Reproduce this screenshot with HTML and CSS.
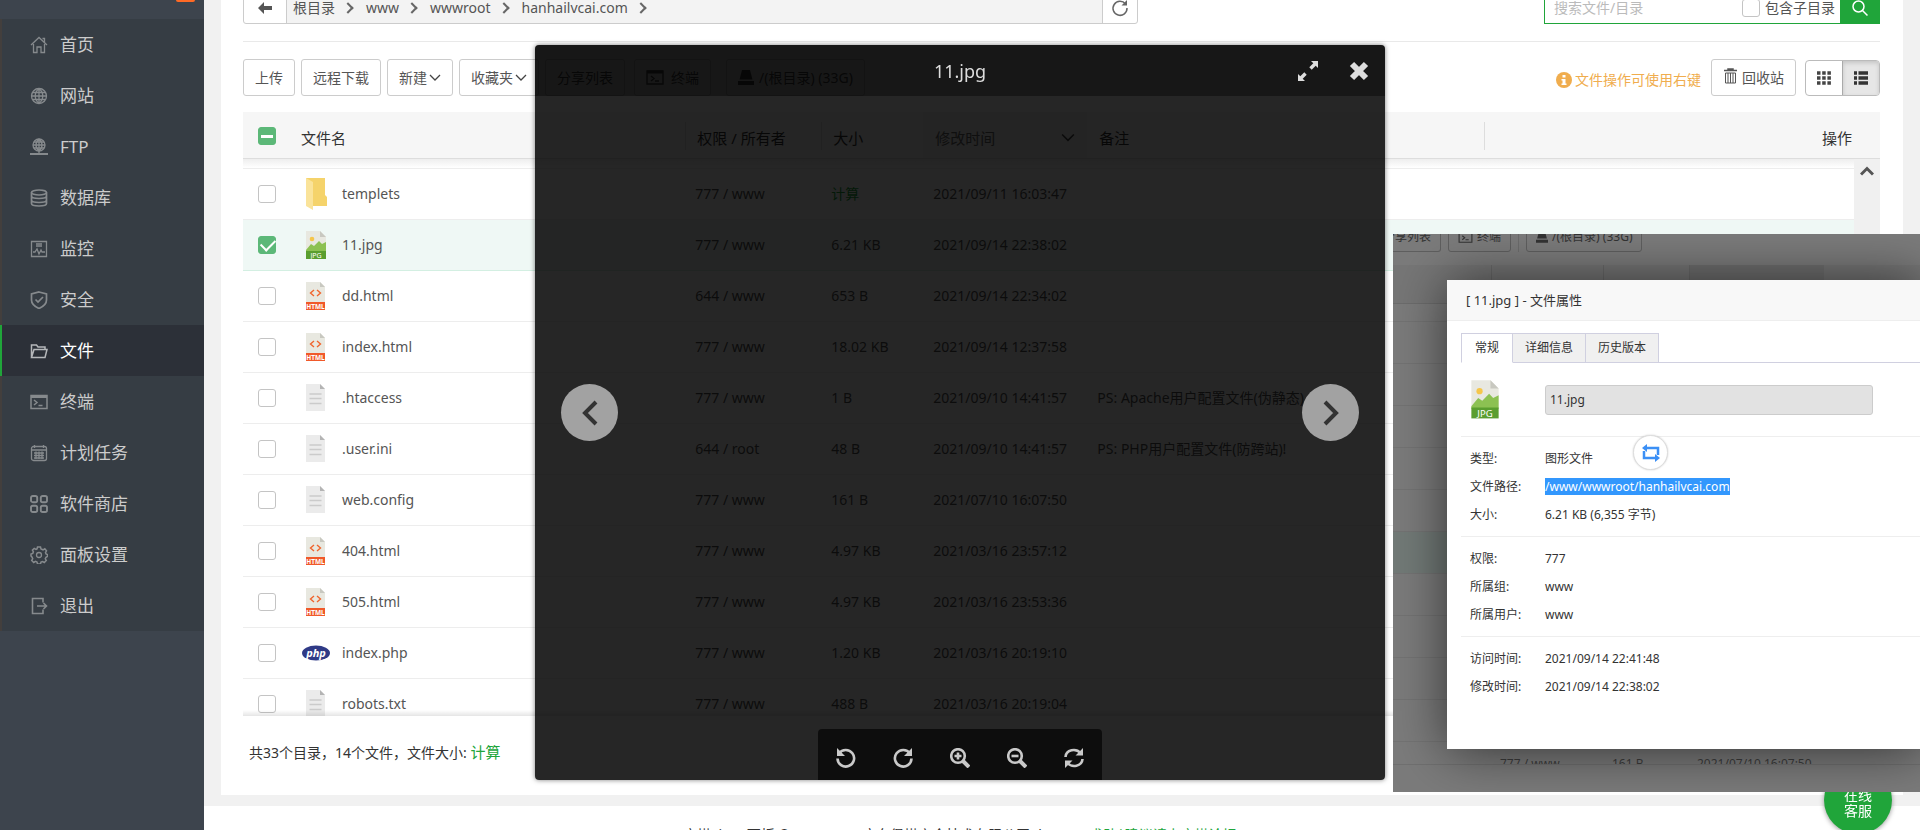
FILE: index.html
```
<!DOCTYPE html>
<html lang="zh-CN">
<head>
    <meta charset="UTF-8">
    <meta name="viewport" content="width=device-width, initial-scale=1.0">
    <title>文件</title>
    <link rel="stylesheet" href="styles.css">
</head>
<body>

<!-- icons used more than once -->
<svg class="sprite" aria-hidden="true">
    <symbol id="i-jpg" viewBox="0 0 22 29">
        <path fill="#e8e8e0" d="M1 0h14l6 6v14H1z"/>
        <path fill="#c8c8c0" d="M15 0l6 6h-6z"/>
        <circle cx="7" cy="8" r="2.3" fill="#f5c64b"/>
        <path fill="#8cc152" d="M1 19l5-6 3 2 5-5 3 3 4-2v10H1z"/>
        <path fill="#5a9e2f" d="M1 20h20v8H1z"/>
        <text x="11" y="27" fill="#fff" font-size="7" text-anchor="middle">JPG</text>
    </symbol>
    <symbol id="i-html" viewBox="0 0 22 29">
        <path fill="#e8e8e0" d="M1 0h14l5 5v15H1z"/>
        <path fill="#c8c8c0" d="M15 0l5 5h-5z"/>
        <path fill="none" stroke="#f0642d" stroke-width="1.4" d="M9 8l-3.500 3L9 14M12 8l3.500 3L12 14"/>
        <path fill="#f0592a" d="M1 20h19v8H1z"/>
        <text x="10.500" y="26.500" fill="#fff" font-size="6.500" font-weight="bold" text-anchor="middle">HTML</text>
    </symbol>
    <symbol id="i-txt" viewBox="0 0 22 29">
        <path fill="#ebebeb" d="M1 0h14l5 5v22H1z"/>
        <path fill="#b4b4b4" d="M15 0l5 5h-5z"/>
        <path stroke="#cbcbcb" stroke-width="1.300" d="M4.500 10h12M4.500 14.500h12M4.500 19.500h12"/>
    </symbol>
    <symbol id="i-down" viewBox="0 0 12 8">
        <path fill="none" stroke="currentColor" stroke-width="1.300" d="M1 1l5 5 5-5"/>
    </symbol>
    <symbol id="i-term" viewBox="0 0 18 15">
        <path fill="none" stroke="currentColor" stroke-width="1.400" d="M1 1h16v13H1zM5 6l3 2.500L5 11M9 11h4"/>
        <path stroke="currentColor" stroke-width="3" d="M1 2h16"/>
    </symbol>
    <symbol id="i-disk" viewBox="0 0 16 15">
        <path fill="currentColor" d="M4 0h8l2.500 9.500h-13zM0 11h16v4H0z"/>
    </symbol>
</svg>

<aside class="sidebar">
    <span class="msg-badge"></span>
    <nav class="menu">
        <a href="#"><svg viewBox="0 0 18 18"><path d="M1 9l8-7.500L17 9M12.500 2.500h2v4M3.500 8v8.500h3.500V11h4v5.500h3.500V8"/></svg>首页</a>
        <a href="#"><svg viewBox="0 0 18 18"><circle cx="9" cy="9" r="7.500"/><path d="M1.500 9h15M9 1.500v15M2.500 5.500h13M2.500 12.500h13M9 1.500c-5 4-5 11 0 15M9 1.500c5 4 5 11 0 15"/></svg>网站</a>
        <a href="#"><svg viewBox="0 0 18 18"><circle cx="9" cy="7" r="6"/><path d="M3 7h12M9 1v15M4 4h10M4 10h10M9 1c-4 3-4 9 0 12M9 1c4 3 4 9 0 12"/><path stroke-width="2" d="M0 16h18M7 16h4"/></svg>FTP</a>
        <a href="#"><svg viewBox="0 0 18 18"><g stroke-width="1.700"><ellipse cx="9" cy="3.500" rx="7.500" ry="2.500"/><path d="M1.500 3.500v11c0 3.300 15 3.300 15 0v-11M1.500 7c0 3.300 15 3.300 15 0M1.500 11c0 3.300 15 3.300 15 0"/></g></svg>数据库</a>
        <a href="#"><svg viewBox="0 0 18 18"><path d="M1.500 1.500h15v15h-15zM6 4h6M6 6h6M3 12h2l2-3 2 5 2-4 1 2h3"/></svg>监控</a>
        <a href="#"><svg viewBox="0 0 18 18"><path stroke-width="1.700" d="M9 1l7.500 2v6c0 4-3 6.500-7.500 8.500C4.500 15.500 1.500 13 1.500 9V3zM5.500 8.500L8 11l5-5"/></svg>安全</a>
        <a href="#" class="on"><svg viewBox="0 0 18 18"><path stroke-width="1.500" d="M1.500 15.500V3h5l1.500 2h7v2M1.500 15.500L4 7.500h13l-2 8z"/></svg>文件</a>
        <a href="#"><svg viewBox="0 0 18 18"><path stroke-width="1.500" d="M1 2.500h16v13H1zM4 7l3 2.500L4 12M8.500 12.500h4"/><path stroke-width="3" d="M1 3.500h16"/></svg>终端</a>
        <a href="#"><svg viewBox="0 0 18 18"><rect x="1.500" y="2.500" width="15" height="14" rx="2"/><path d="M1.500 6h15M4.500 1v3M13.500 1v3M4 9h10M4 11.500h10M4 14h10M6 7.500V15M9 7.500V15M12 7.500V15"/></svg>计划任务</a>
        <a href="#"><svg viewBox="0 0 18 18"><g stroke-width="1.900"><rect x="1" y="1" width="6.200" height="6.200" rx="1.800"/><rect x="10.800" y="1" width="6.200" height="6.200" rx="1.800"/><rect x="1" y="10.800" width="6.200" height="6.200" rx="1.800"/><rect x="10.800" y="10.800" width="6.200" height="6.200" rx="1.800"/></g></svg>软件商店</a>
        <a href="#"><svg viewBox="0 0 18 18"><circle cx="9" cy="9" r="2.500"/><path stroke-width="1.500" d="M7.500 1h3l.5 2 2 .8 1.800-1 1.700 2-1 1.800.5 1.400 1.500.5v2l-1.500.8-.7 1.500 1 1.700-2 2-1.700-1-1.600.6-.5 1.900h-3l-.5-1.900-1.500-.7-1.800 1.100-2-2 1-1.700-.6-1.600L1 10V8l1.800-.6.6-1.500-1-1.700 1.800-1.800L6 3.500l1-.5z"/></svg>面板设置</a>
        <a href="#"><svg viewBox="0 0 18 18"><path stroke-width="1.600" d="M13 5.500V1.500H2.500v15H13v-4M7 9h9.500M13.500 6l3 3-3 3"/></svg>退出</a>
    </nav>
</aside>

<main class="main">
    <section class="card">
        <div class="path-row">
            <div class="path">
                <button class="path-btn back" aria-label="返回"><svg width="14" height="12" viewBox="0 0 14 12"><path fill="#555" d="M0 6l6-6v4h8v4H6v4z"/></svg></button>
                <div class="crumbs">
                    <a href="#">根目录</a><a href="#">www</a><a href="#">wwwroot</a><a href="#">hanhailvcai.com</a>
                </div>
                <button class="path-btn" aria-label="刷新"><svg width="18" height="18" viewBox="0 0 18 18"><path fill="none" stroke="#666" stroke-width="1.500" d="M14.500 5A7 7 0 1 0 16 9"/><path fill="#666" d="M16 1v5.500h-5.500z"/></svg></button>
            </div>
            <div class="search">
                <input type="text" placeholder="搜索文件/目录" aria-label="搜索文件/目录">
                <input type="checkbox" class="ck" id="sub"><label for="sub">包含子目录</label>
                <button aria-label="搜索"><svg width="18" height="18" viewBox="0 0 18 18"><g fill="none" stroke="#fff" stroke-width="1.500"><circle cx="7.500" cy="7.500" r="5.500"/><path d="M11.500 11.500l5 5"/></g></svg></button>
            </div>
        </div>

        <div class="tools">
            <button class="btn">上传</button>
            <button class="btn">远程下载</button>
            <button class="btn">新建<svg class="down"><use href="#i-down"/></svg></button>
            <button class="btn">收藏夹<svg class="down"><use href="#i-down"/></svg></button>
            <button class="btn">分享列表</button>
            <button class="btn term"><svg width="18" height="15"><use href="#i-term"/></svg>终端</button>
            <button class="btn disk"><svg width="16" height="15"><use href="#i-disk"/></svg>/(根目录) (33G)</button>
            <span class="tip"><svg width="16" height="16" viewBox="0 0 16 16"><circle cx="8" cy="8" r="8" fill="#f0ad4e"/><path fill="#fff" d="M6.500 3h3v2.500h-3zM5.500 7h4v4.500h1V13h-5v-1.500h1v-3h-1z"/></svg>文件操作可使用右键</span>
            <button class="btn bin"><svg width="13" height="16" viewBox="0 0 13 16"><g fill="none" stroke="#555"><path stroke-width="1.500" d="M0 2.500h13M4 2.500V1h5v1.500"/><path d="M1.500 5h10v10h-10zM4 5v10M6.500 5v10M9 5v10"/></g></svg>回收站</button>
            <div class="views">
                <button aria-label="图标"><svg width="14" height="14" viewBox="0 0 14 14"><path stroke="#444" stroke-width="3.500" stroke-dasharray="3.500 1.700" d="M0 2h14M0 7h14M0 12h14"/></svg></button>
                <button class="on" aria-label="列表"><svg width="14" height="14" viewBox="0 0 14 14"><path stroke="#333" stroke-width="3.500" stroke-dasharray="3 1.500 10" d="M0 2h14M0 7h14M0 12h14"/></svg></button>
            </div>
        </div>

        <div class="list">
            <table>
                <colgroup>
                    <col class="c-ck"><col><col class="c-perm"><col class="c-size"><col class="c-time"><col><col>
                </colgroup>
                <thead>
                    <tr>
                        <th><input type="checkbox" class="ck half" aria-label="全选"></th>
                        <th>文件名</th>
                        <th class="sep">权限 / 所有者</th>
                        <th class="sep">大小</th>
                        <th class="sort"><span>修改时间<svg class="down"><use href="#i-down"/></svg></span></th>
                        <th>备注</th>
                        <th class="sep op">操作</th>
                    </tr>
                </thead>
                <tbody id="files">
                    <tr class="cut"><td colspan="7"></td></tr>
                </tbody>
            </table>
            <div class="scroll"><svg width="14" height="10" viewBox="0 0 14 10"><path fill="none" stroke="#555" stroke-width="3" d="M1 8.500l6-6 6 6"/></svg></div>
        </div>

        <div class="total">共33个目录，14个文件，文件大小: <a href="#">计算</a></div>
    </section>
    <footer class="copy">宝塔Linux面板 ©2014-2021 广东堡塔安全技术有限公司 (bt.cn)<a href="#">求助|建议请上宝塔论坛</a></footer>
</main>

<button class="service">在线<br>客服</button>

<!-- image preview -->
<div class="preview">
    <div class="preview-head">
        <span class="preview-title">11.jpg</span>
        <button aria-label="全屏"><svg width="22" height="22" viewBox="0 0 22 22"><path fill="#ddd" d="M14 1h7v7l-2.300-2.300-4 4-2.400-2.400 4-4zM8 21H1v-7l2.300 2.300 4-4 2.400 2.400-4 4z"/></svg></button>
        <button aria-label="关闭"><svg width="20" height="20" viewBox="0 0 20 20"><path stroke="#ddd" stroke-width="6" d="M3 3l14 14M17 3L3 17"/></svg></button>
    </div>
    <div class="preview-body">
        <button class="arrow" aria-label="上一张"><svg width="18" height="28" viewBox="0 0 18 28"><path fill="none" stroke="#333" stroke-width="4" d="M15 3L4 14l11 11"/></svg></button>
        <button class="arrow" aria-label="下一张"><svg width="18" height="28" viewBox="0 0 18 28"><path fill="none" stroke="#333" stroke-width="4" d="M3 3l11 11L3 25"/></svg></button>
    </div>
    <div class="preview-tools">
        <button aria-label="左旋"><svg viewBox="0 0 20 20"><path d="M3 5.500A8.300 8.300 0 1 1 1.500 10.500"/><path class="fill" d="M1 0v8h8z"/></svg></button>
        <button aria-label="右旋"><svg viewBox="0 0 20 20"><path d="M17 5.500A8.300 8.300 0 1 0 18.500 10.500"/><path class="fill" d="M19 0v8h-8z"/></svg></button>
        <button aria-label="放大"><svg viewBox="0 0 20 20"><circle cx="8" cy="8" r="6.800"/><path d="M8 4.500v7M4.500 8h7"/><path stroke-width="4" d="M13 13l6 6"/></svg></button>
        <button aria-label="缩小"><svg viewBox="0 0 20 20"><circle cx="8" cy="8" r="6.800"/><path d="M4.500 8h7"/><path stroke-width="4" d="M13 13l6 6"/></svg></button>
        <button aria-label="重置"><svg viewBox="0 0 20 20"><path d="M1.500 9C2 1.500 12 0 16.500 5M18.500 11C18 18.500 8 20 3.500 15"/><path class="fill" d="M19 0v7.500h-7.500zM1 20v-7.500h7.500z"/></svg></button>
    </div>
</div>

<!-- file properties -->
<div class="shot">
    <div class="shot-tools">
        <span class="first">分享列表</span>
        <span><svg width="15" height="12"><use href="#i-term"/></svg>终端</span>
        <i></i>
        <span><svg width="12" height="12"><use href="#i-disk"/></svg>/(根目录) (33G)</span>
    </div>
    <div class="shot-head"><i></i><i></i><i class="dark"></i></div>
    <div class="shot-rows">
        <p></p><p></p><p></p><p></p><p></p><p></p><p class="on"></p><p></p><p></p><p></p><p></p>
        <div class="shot-last"><span>777 / www</span><span>161 B</span><span>2021/07/10 16:07:50</span></div>
    </div>
    <div class="shot-foot"></div>

    <div class="prop">
        <h2>[ 11.jpg ] - 文件属性</h2>
        <div class="tabs">
            <button class="on">常规</button><button>详细信息</button><button>历史版本</button>
        </div>
        <div class="prop-name">
            <svg width="30" height="40"><use href="#i-jpg"/></svg>
            <input type="text" value="11.jpg" aria-label="文件名" disabled>
        </div>
        <dl>
            <dt>类型:</dt><dd>图形文件</dd>
            <dt>文件路径:</dt><dd><mark>/www/wwwroot/hanhailvcai.com</mark></dd>
            <dt>大小:</dt><dd>6.21 KB (6,355 字节)</dd>
        </dl>
        <dl>
            <dt>权限:</dt><dd>777</dd>
            <dt>所属组:</dt><dd>www</dd>
            <dt>所属用户:</dt><dd>www</dd>
        </dl>
        <dl>
            <dt>访问时间:</dt><dd>2021/09/14 22:41:48</dd>
            <dt>修改时间:</dt><dd>2021/09/14 22:38:02</dd>
        </dl>
        <button class="trans" aria-label="翻译"><svg width="18" height="18" viewBox="0 0 18 18"><path fill="none" stroke="#3b8ff5" stroke-width="2.500" d="M4 4h12v7M14 14H2V7"/><path fill="#3b8ff5" d="M5 0v8L0 4zM13 10v8l5-4z"/></svg></button>
    </div>
</div>

<script>
    const files = [
        ["dir", "templets", "777 / www", "计算", "2021/09/11 16:03:47", ""],
        ["jpg", "11.jpg", "777 / www", "6.21 KB", "2021/09/14 22:38:02", ""],
        ["html", "dd.html", "644 / www", "653 B", "2021/09/14 22:34:02", ""],
        ["html", "index.html", "777 / www", "18.02 KB", "2021/09/14 12:37:58", ""],
        ["txt", ".htaccess", "777 / www", "1 B", "2021/09/10 14:41:57", "PS: Apache用户配置文件(伪静态)"],
        ["txt", ".user.ini", "644 / root", "48 B", "2021/09/10 14:41:57", "PS: PHP用户配置文件(防跨站)!"],
        ["txt", "web.config", "777 / www", "161 B", "2021/07/10 16:07:50", ""],
        ["html", "404.html", "777 / www", "4.97 KB", "2021/03/16 23:57:12", ""],
        ["html", "505.html", "777 / www", "4.97 KB", "2021/03/16 23:53:36", ""],
        ["php", "index.php", "777 / www", "1.20 KB", "2021/03/16 20:19:10", ""],
        ["txt", "robots.txt", "777 / www", "488 B", "2021/03/16 20:19:04", ""]
    ];

    function icon(type) {
        if (type === "dir") {
            return '<svg width="28" height="34" viewBox="0 0 28 34"><path fill="#f5d36b" d="M4 1h19v17l2 2v9H10z"/><path fill="#fae39a" d="M4 1l7 4v28l-7-4z"/></svg>';
        }
        if (type === "php") {
            return '<svg width="28" height="16" viewBox="0 0 28 16"><ellipse cx="14" cy="8" rx="14" ry="7.500" fill="#2f3a86"/><text x="14" y="11.500" fill="#fff" font-size="11" font-weight="bold" font-style="italic" text-anchor="middle">php</text></svg>';
        }
        return '<svg width="28" height="29"><use href="#i-' + type + '"/></svg>';
    }

    const body = document.getElementById("files");
    files.forEach(f => {
        const tr = document.createElement("tr");
        const on = f[1] === "11.jpg";
        if (on) tr.className = "on";
        const size = f[3] === "计算" ? '<a href="#">计算</a>' : f[3];
        tr.innerHTML = `<td><input type="checkbox" class="ck" aria-label="${f[1]}" ${on ? "checked" : ""}></td>
            <td><span class="name">${icon(f[0])}${f[1]}</span></td>
            <td>${f[2]}</td><td>${size}</td><td>${f[4]}</td><td>${f[5]}</td><td></td>`;
        body.appendChild(tr);
    });
</script>

</body>
</html>
```
FILE: styles.css
```
* {
    box-sizing: border-box;
}
body {
    margin: 0;
    height: 100vh;
    display: flex;
    overflow: hidden;
    background: #f1f1f1;
    color: #555;
    font: 14px/20px "Noto Sans", "Noto Sans CJK SC", sans-serif;
}
button, input {
    font: inherit;
    color: inherit;
}
button {
    padding: 0;
    border: 0;
    background: none;
    cursor: pointer;
}
a {
    color: #20a53a;
    text-decoration: none;
}
.sprite {
    display: none;
}

/* sidebar */
.sidebar {
    flex: none;
    width: 204px;
    padding-top: 19px;
    background: #3d444d;
    position: relative;
}
.msg-badge {
    position: absolute;
    top: 0;
    right: 9px;
    width: 19px;
    height: 2px;
    border-radius: 0 0 6px 6px;
    background: #ff6a25;
}
.menu {
    background: #363d44;
}
.menu a {
    display: flex;
    align-items: center;
    gap: 12px;
    height: 51px;
    padding-left: 28px;
    border-left: 2px solid #433f3d;
    color: #ccc;
    font-size: 17px;
}
.menu svg {
    width: 18px;
    height: 18px;
    fill: none;
    stroke: #868a8d;
    stroke-width: 1.3;
}
.menu .on {
    background: #2c3038;
    border-left-color: #20a53a;
    color: #fff;
}
.menu .on svg {
    stroke: #b5b7ba;
}

/* file area, scrolled a little past its top edge */
.main {
    flex: 1;
    min-width: 0;
    margin-top: -8px;
    display: flex;
    flex-direction: column;
}
.card {
    flex: 1;
    min-height: 0;
    margin: 0 17px 11px;
    padding: 0 23px 0 22px;
    display: flex;
    flex-direction: column;
    background: #fff;
}
.path-row {
    display: flex;
    justify-content: space-between;
    padding-bottom: 17px;
    border-bottom: 1px solid #e9e9e9;
}
.path {
    display: flex;
    width: 895px;
    height: 32px;
    border: 1px solid #ccc;
    border-radius: 3px;
}
.path-btn {
    width: 34px;
    display: flex;
    align-items: center;
    justify-content: center;
}
.back {
    width: 42px;
}
.crumbs {
    flex: 1;
    display: flex;
    padding-left: 6px;
    border: solid #ccc;
    border-width: 0 1px;
    background: #f3f3f3;
    line-height: 30px;
}
.crumbs a {
    display: flex;
    align-items: center;
    color: #555;
}
.crumbs a::after {
    content: "";
    width: 6px;
    height: 6px;
    margin: 0 14px 0 9px;
    border: solid #666;
    border-width: 2px 2px 0 0;
    transform: rotate(45deg);
}
.search {
    width: 336px;
    display: flex;
    align-items: center;
    border: 1px solid #20a53a;
}
.search input[type=text] {
    flex: 1;
    min-width: 0;
    padding: 0 9px;
    border: 0;
    background: none;
}
.search input::placeholder {
    color: #bbb;
}
.search label {
    margin: 0 5px;
}
.search button {
    width: 39px;
    height: 30px;
    display: flex;
    align-items: center;
    justify-content: center;
    background: #20a53a;
}
.ck {
    appearance: none;
    flex: none;
    width: 18px;
    height: 18px;
    margin: 0;
    border: 1px solid #c4c4c4;
    border-radius: 3px;
    background: #fff;
}
.ck:checked, .half {
    display: block;
    border-color: #5cb878;
    background: #5cb878;
    position: relative;
}
.ck:checked::after {
    content: "";
    position: absolute;
    left: 2px;
    top: 2px;
    width: 12px;
    height: 7px;
    border: solid #fff;
    border-width: 0 0 2px 2px;
    transform: rotate(-45deg);
}
.half::after {
    content: "";
    position: absolute;
    left: 2px;
    top: 7px;
    width: 12px;
    height: 3px;
    background: #fff;
}

.tools {
    display: flex;
    align-items: center;
    gap: 6px;
    padding: 17px 0 16px;
}
.btn {
    display: flex;
    align-items: center;
    height: 37px;
    padding: 0 11px;
    border: 1px solid #ccc;
    border-radius: 3px;
    background: #fff;
    white-space: nowrap;
}
.down {
    width: 12px;
    height: 8px;
    margin-left: 2px;
    color: #444;
}
.term {
    gap: 7px;
    margin-left: 3px;
}
.disk {
    gap: 5px;
    margin-left: 9px;
}
.tip {
    margin-left: auto;
    display: flex;
    align-items: center;
    gap: 3px;
    padding: 4px 4px 0 0;
    color: #f0ad4e;
}
.bin {
    gap: 5px;
}
.bin svg {
    margin: 0 0 4px 1px;
}
.views {
    display: flex;
    margin-left: 3px;
    height: 36px;
    border: 1px solid #bbb;
    border-radius: 4px;
    overflow: hidden;
}
.views button {
    width: 36px;
    display: flex;
    align-items: center;
    justify-content: center;
}
.views .on {
    width: 37px;
    border-left: 1px solid #aaa;
    background: #e6e6e6;
    box-shadow: inset 0 2px 4px rgba(0, 0, 0, 0.15);
}

.list {
    flex: 1;
    min-height: 0;
    overflow: hidden;
    position: relative;
}
.list::after {
    content: "";
    position: absolute;
    left: 0;
    right: 0;
    bottom: 0;
    height: 6px;
    background: linear-gradient(rgba(0, 0, 0, 0), rgba(0, 0, 0, 0.1));
}
table {
    width: 100%;
    table-layout: fixed;
    border-collapse: separate;
    border-spacing: 0;
}
.c-ck { width: 46px; }
.c-perm { width: 136px; }
.c-size { width: 102px; }
.c-time { width: 164px; }
th {
    height: 47px;
    padding: 5px 12px 0;
    border-bottom: 1px solid #ddd;
    background: #f6f6f6;
    color: #333;
    font-size: 15px;
    font-weight: normal;
    text-align: left;
}
th:first-child {
    padding: 2px 15px 0;
}
.sep {
    background: linear-gradient(#ddd, #ddd) 0 10px / 1px 28px no-repeat #f6f6f6;
}
.sort {
    background: #eee;
    color: #666;
}
.sort span {
    display: flex;
    align-items: center;
    justify-content: space-between;
}
.sort .down {
    width: 14px;
    height: 10px;
}
.op {
    padding-right: 28px;
    text-align: right;
}
td {
    height: 51px;
    padding: 0 10px;
    border-bottom: 1px solid #ededed;
    white-space: nowrap;
}
td:first-child {
    padding: 0 15px;
}
td .ck {
    display: block;
}
.cut td {
    height: 10px;
    background: linear-gradient(#eee, #fff);
}
tr.on td {
    background: #eff8f5;
    border-bottom-color: #d3efe2;
}
.name {
    display: flex;
    align-items: center;
    gap: 12px;
    padding-left: 3px;
}
.scroll {
    position: absolute;
    top: 47px;
    right: 0;
    bottom: 0;
    width: 26px;
    padding-top: 2px;
    background: #f0f0f0;
    text-align: center;
}
.total {
    height: 79px;
    padding: 26px 6px;
    color: #333;
}
.total a {
    font-size: 15px;
}
.copy {
    height: 24px;
    padding: 19px 204px 0 0;
    background: #fff;
    color: #333;
    text-align: center;
}
.copy a {
    margin-left: 14px;
}
.service {
    position: fixed;
    right: 28px;
    bottom: -4px;
    width: 68px;
    height: 68px;
    padding-top: 6px;
    border-radius: 50%;
    background: #20a53a;
    box-shadow: 0 1px 5px rgba(0, 0, 0, 0.4);
    color: #fff;
    line-height: 16px;
}

/* preview */
.preview {
    position: fixed;
    top: 45px;
    left: calc(50% - 425px);
    width: 850px;
    height: 735px;
    display: flex;
    flex-direction: column;
    border-radius: 4px;
    background: rgba(0, 0, 0, 0.85);
    box-shadow: 0 0 5px rgba(0, 0, 0, 0.5);
}
.preview-head {
    display: flex;
    align-items: center;
    gap: 30px;
    height: 51px;
    padding: 0 16px 0 118px;
    border-radius: 4px 4px 0 0;
    background: rgba(0, 0, 0, 0.4);
}
.preview-head button, .preview-tools button {
    display: flex;
    align-items: center;
    justify-content: center;
}
.preview-title {
    flex: 1;
    color: #ddd;
    font-size: 18px;
    text-align: center;
}
.preview-body {
    flex: 1;
    display: flex;
    justify-content: space-between;
    align-items: center;
    padding: 0 26px;
}
.arrow {
    display: flex;
    align-items: center;
    justify-content: center;
    width: 57px;
    height: 57px;
    border-radius: 50%;
    background: #a2a2a2;
}
.preview-tools {
    align-self: center;
    display: flex;
    width: 284px;
    height: 51px;
    padding-top: 7px;
    border-radius: 4px 4px 0 0;
    background: rgba(0, 0, 0, 0.65);
}
.preview-tools button {
    flex: 1;
}
.preview-tools svg {
    width: 20px;
    height: 20px;
    fill: none;
    stroke: #c9c9c9;
    stroke-width: 2.6;
}
.preview-tools .fill {
    fill: #c9c9c9;
    stroke: none;
}

/* properties window with the dimmed list behind it */
.shot {
    position: fixed;
    top: 234px;
    right: 0;
    width: 527px;
    height: 558px;
    display: flex;
    flex-direction: column;
    overflow: hidden;
    background: #7b7b7b;
    color: #333;
    font-size: 12px;
}
.shot-tools {
    display: flex;
    gap: 7px;
    height: 18px;
    align-items: flex-end;
}
.shot-tools span {
    display: flex;
    align-items: center;
    gap: 4px;
    height: 31px;
    padding: 0 9px;
    border: 1px solid #5f5f5f;
    border-radius: 3px;
    white-space: nowrap;
}
.shot-tools .first {
    padding-left: 0;
    border-left: 0;
    margin-left: -10px;
}
.shot-tools i {
    height: 18px;
    border-left: 1px solid #6c6c6c;
}
.shot-head {
    display: flex;
    height: 39px;
    margin-top: 13px;
    padding-left: 98px;
    border-bottom: 1px solid #6c6c6c;
    background: #767676;
}
.shot-head i {
    width: 112px;
    border-left: 1px solid #6a6a6a;
}
.shot-head i:nth-child(2) {
    width: 86px;
}
.shot-head .dark {
    width: 135px;
    background: #6f6f6f;
}
.shot-rows {
    flex: 1;
    min-height: 0;
    overflow: hidden;
}
.shot-rows p {
    height: 42px;
    margin: 0;
    border-bottom: 1px solid #737373;
}
.shot-rows p:first-child {
    height: 18px;
}
.shot-rows .on {
    background: #727a77;
}
.shot-last {
    display: grid;
    grid-template-columns: 112px 85px auto;
    padding: 12px 0 0 107px;
    color: #3d3d3d;
}
.shot-foot {
    height: 28px;
    border-top: 1px solid #707070;
}
.prop {
    position: absolute;
    top: 46px;
    left: 54px;
    right: 0;
    height: 469px;
    background: #fff;
    box-shadow: 1px 1px 50px rgba(0, 0, 0, 0.6);
}
.prop h2 {
    height: 41px;
    margin: 0 0 12px;
    padding-left: 19px;
    border-bottom: 1px solid #eee;
    background: #f8f8f8;
    font-size: 13px;
    font-weight: normal;
    line-height: 41px;
}
.tabs {
    display: flex;
    margin-left: 14px;
    height: 30px;
    border-bottom: 1px solid #d0d0e0;
}
.tabs button {
    height: 30px;
    padding: 0 12px;
    border: 1px solid #d0d0e0;
    border-left-width: 0;
    background: #f0f0f0;
}
.tabs .on {
    padding: 0 13px;
    border-left-width: 1px;
    border-bottom-color: #fff;
    background: #fff;
}
.prop-name {
    display: flex;
    align-items: center;
    gap: 45px;
    height: 73px;
    margin-left: 14px;
    padding-left: 9px;
}
.prop-name input {
    width: 328px;
    height: 30px;
    padding: 0 4px;
    border: 1px solid #ccc;
    border-radius: 3px;
    background: #e2e2e2;
    font-size: 12px;
}
.prop dl {
    display: grid;
    grid-template-columns: 75px 1fr;
    margin: 0 0 0 14px;
    padding: 8px 9px 7px;
    border-top: 1px solid #eee;
    line-height: 28px;
}
.prop dd {
    margin: 0;
}
mark {
    background: #3297fd;
    color: #fff;
}
.trans {
    position: absolute;
    top: 155px;
    left: 186px;
    width: 35px;
    height: 35px;
    display: flex;
    align-items: center;
    justify-content: center;
    border: 1px solid #ddd;
    border-radius: 50%;
    background: #fff;
    box-shadow: 0 0 2px rgba(0, 0, 0, 0.2);
}
```
